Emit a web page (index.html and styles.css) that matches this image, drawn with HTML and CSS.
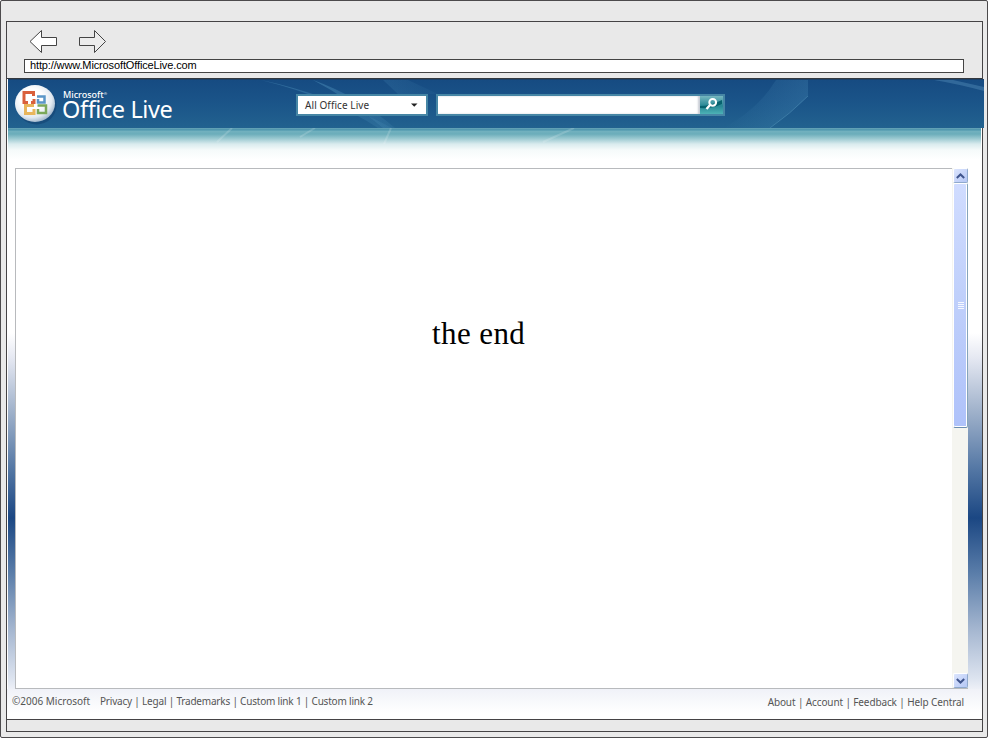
FILE: index.html
```html
<!DOCTYPE html>
<html lang="en">
<head>
<meta charset="utf-8">
<title>Microsoft Office Live</title>
<link rel="stylesheet" href="styles.css">
</head>
<body>
<div class="window">
  <div class="frame">
    <div class="toolbar">
      <div class="nav">
        <svg width="28" height="24" viewBox="0 0 28 24"><path d="M0 11.500 11.500.5V7.500H26.500V15.500H11.500V22.500Z" fill="#fff" stroke="#444"/></svg>
        <svg width="28" height="24" viewBox="0 0 28 24"><path d="M26.500 11.500 15.500.5V7.500H.5V15.500H15.500V22.500Z" fill="#ececec" stroke="#444"/></svg>
      </div>
      <div class="address"><span class="url">http://www.MicrosoftOfficeLive.com</span></div>
    </div>
    <header class="banner">
      <svg class="rays" width="976" height="48" viewBox="0 0 976 48">
        <defs>
          <linearGradient id="ray" x1="0" y1="0" x2="1" y2="0"><stop offset="0" stop-color="#5aa0c8" stop-opacity="0"/><stop offset="1" stop-color="#5aa0c8" stop-opacity=".22"/></linearGradient>
          <linearGradient id="fade" x1="0" y1="0" x2="1" y2="0"><stop offset="0" stop-color="#5aa0c8" stop-opacity=".4"/><stop offset="1" stop-color="#5aa0c8" stop-opacity=".12"/></linearGradient>
        </defs>
        <path d="M253 0Q320 14 384 48H370Q325 18 253 0Z" fill="url(#fade)"/>
        <path d="M305 0Q350 16 387 48H375Q340 18 305 0Z" fill="url(#fade)"/>
        <path d="M375 0 390 14H430L400 0Z" fill="url(#fade)" opacity=".4"/>
        <path d="M800 0V16Q782 34 762 48H715Q750 30 768 0Z" fill="url(#ray)"/>
        <path d="M800 16Q782 34 762 48" fill="none" stroke="#5d9dc0" opacity=".4"/>
        <path d="M926 0Q950 4 976 11V7L945 0Z" fill="#5b94bd" opacity=".4"/>
      </svg>
      <div class="brand">
        <svg class="orb" width="43" height="42" viewBox="0 0 43 42">
          <defs><radialGradient id="orb" cx=".42" cy=".38" r=".62"><stop offset=".45" stop-color="#fff"/><stop offset=".8" stop-color="#e3eaf1"/><stop offset="1" stop-color="#a9bdd0"/></radialGradient></defs>
          <ellipse cx="21.500" cy="20.500" rx="20" ry="19" fill="#123f70" opacity=".55"/>
          <ellipse cx="20" cy="18.500" rx="20" ry="18.500" fill="url(#orb)"/>
          <g fill="none" stroke-width="3">
            <path d="M18.500 11V7.500H9V17.500H13M16 17.500H19V14" stroke="#d9603c"/>
            <path d="M22 11.500H29.500V17.500H23V14" stroke="#5b96c8" stroke-width="2.500"/>
            <path d="M19 20.500H10.500V28.500H19V24" stroke="#e9b65c"/>
            <path d="M22.500 20.500H31V28H23V24" stroke="#7ba85a" stroke-width="2.500"/>
          </g>
        </svg>
        <div class="wordmark"><span class="ms">Microsoft<sup>®</sup></span><span class="ol">Office Live</span></div>
      </div>
      <div class="scope"><span>All Office Live</span><svg width="7" height="4" viewBox="0 0 7 4"><path d="M0 .5H6.500L3.250 3.700Z" fill="#222"/></svg></div>
      <div class="search">
        <div class="field"></div>
        <div class="go"><svg width="22" height="17" viewBox="0 0 22 17"><path d="M0 10Q10 10 22 4V8Q12 13 0 12Z" fill="#07626f"/><g fill="none" stroke="#fff"><circle cx="12.700" cy="6.300" r="3.400" stroke-width="2"/><path d="M10 9 6.500 13" stroke-width="2.400"/></g></svg></div>
      </div>
    </header>
    <div class="glow">
      <svg width="600" height="22" viewBox="0 0 600 22"><g fill="none" stroke="#fff" stroke-width="2" opacity=".16"><path d="M224 0 209 14M307 0 292 9M383 0 376 16M566 0 535 14"/></g></svg>
    </div>
    <main class="stage">
      <div class="edge"></div>
      <div class="page"><p>the end</p></div>
      <div class="scrollbar">
        <div class="button"><svg width="9" height="6" viewBox="0 0 9 6"><path d="M.8 5 4.500 1.500 8.200 5" fill="none" stroke="#40558d" stroke-width="2"/></svg></div>
        <div class="thumb"><i></i><i></i><i></i><i></i></div>
        <div class="track"></div>
        <div class="button"><svg width="9" height="6" viewBox="0 0 9 6"><path d="M.8 1 4.500 4.500 8.200 1" fill="none" stroke="#40558d" stroke-width="2"/></svg></div>
      </div>
      <div class="edge"></div>
    </main>
    <footer class="footer">
      <div class="links left"><span class="copy">©2006 Microsoft</span><span class="nav-links">Privacy | Legal | Trademarks | Custom link 1 | Custom link 2</span></div>
      <div class="links right">About | Account | Feedback | Help Central</div>
    </footer>
    <div class="status"></div>
  </div>
</div>
</body>
</html>
```
FILE: styles.css
```css
* { box-sizing: border-box; }

body { margin: 0; background: #fff; }

.window {
  width: 988px;
  height: 738px;
  padding: 20px 4px 5px 5px;
  border: 1px solid #4c4a4c;
  border-radius: 2px;
  background: #e9e9e9;
}

.frame {
  display: flex;
  flex-direction: column;
  width: 977px;
  height: 711px;
  border: 1px solid #454345;
  background: #fff;
}

.toolbar {
  height: 57px;
  flex: none;
  padding: 8px 18px 0 17px;
  border-bottom: 1px solid #34383e;
  background: #e9e9e9;
}

.nav { display: flex; gap: 21px; height: 29px; padding-left: 6px; }

.address {
  height: 14px;
  width: 940px;
  padding-left: 5px;
  border: 1px solid #444;
  background: #fff;
  font: 11px/11px "Liberation Sans", Arial, sans-serif;
  color: #000;
  white-space: nowrap;
}

.url { letter-spacing: -0.13px; }

.banner {
  position: relative;
  display: flex;
  flex: none;
  width: 976px;
  height: 49px;
  margin-left: 1px;
  border-top: 1px solid #1b4067;
  background: linear-gradient(#164b82, #1b5589 50%, #22628f);
}

.rays { position: absolute; top: 0; left: 0; }

.brand { position: relative; display: flex; width: 288px; padding: 5px 0 0 7px; }

.orb { flex: none; }

.wordmark {
  display: flex;
  flex-direction: column;
  padding: 5px 0 0 5px;
  color: #fff;
  font-family: "Noto Sans", "Open Sans", sans-serif;
  white-space: nowrap;
}

.ms { height: 10px; font-size: 9px; line-height: 10px; font-weight: 500; }
.ms sup { font-size: 4px; line-height: 0; vertical-align: 3px; }
.ol { font-size: 23.5px; line-height: 18px; letter-spacing: -0.4px; font-variant-ligatures: common-ligatures; margin-left: -1px; }

.scope {
  position: relative;
  display: flex;
  align-items: center;
  justify-content: space-between;
  width: 132px;
  height: 22px;
  margin-top: 14px;
  padding: 0 8px 0 7px;
  border: 2px solid #4686a5;
  background: #fff;
  color: #333;
  font: 10px/18px "Noto Sans", "Open Sans", sans-serif;
  letter-spacing: 0.08px;
}

.search {
  position: relative;
  display: flex;
  width: 289px;
  height: 22px;
  margin: 14px 0 0 8px;
  border: 2px solid #4686a5;
  background: #fff;
}

.field { width: 262px; box-shadow: inset -2px 0 2px #c9cdd5; }

.go {
  width: 23px;
  background: linear-gradient(#76b7c0, #278794 55%, #4db2b6);
}
.go svg { display: block; }

.glow {
  height: 40px;
  flex: none;
  width: 973px;
  margin-left: 1px;
  background: linear-gradient(#68a5b8 0, #4a94ab 2px, #72b1bf 3px, #6badba 6px, #a0ccd3 11px, #d9ebee 16px, #f5fafa 22px, #fff 32px);
}
.glow svg { display: block; }

.stage {
  display: grid;
  grid-template-columns: 7px 937px 16px 14px;
  height: 521px;
  flex: none;
  margin-left: 1px;
}

.edge {
  background: linear-gradient(#fff 165px, #e5e8f2 190px, #a4b5cd 240px, #5578a5 300px, #1b4783 350px, #5a7da9 405px, #a3b5cf 460px, #dce3ef 510px, #edf0f7);
}

.page {
  border: solid #b8babd;
  border-width: 1px 0 1px 1px;
  background: #fff;
  color: #000;
}

.page p {
  margin: 148px 0 0 416px;
  font: 31px/34px "Liberation Serif", "Times New Roman", serif;
  letter-spacing: 0.4px;
}

.scrollbar {
  display: flex;
  flex-direction: column;
  padding: 0 0 0 1px;
  border-bottom: 1px solid #b8babd;
  background: #f5f5f0;
}

.button {
  display: flex;
  align-items: center;
  justify-content: center;
  height: 15px;
  border: 1px solid #fff;
  border-right-color: #8fa9cc;
  border-bottom-color: #8fa9cc;
  border-radius: 2px;
  background: linear-gradient(135deg, #dce5fd, #b5c7f5);
}

.thumb {
  display: flex;
  flex-direction: column;
  align-items: center;
  justify-content: center;
  gap: 1px;
  height: 245px;
  border: 1px solid #fff;
  border-right-color: #85a4bb;
  border-bottom-color: #6b8db0;
  border-radius: 2px;
  background: linear-gradient(#d0dcff, #c0d0fb 45%, #afc2fa);
  box-shadow: inset -1px 0 #fff, inset 0 -1px #fff;
}

.thumb i { width: 6px; height: 1px; background: #f5f8ff; }

.track { flex: 1; }

.footer {
  display: flex;
  justify-content: space-between;
  height: 30px;
  flex: none;
  padding: 4px 18px 0 5px;
  background: linear-gradient(#f0f2f8, #fff 24px);
  color: #555;
  font: 10px/16px "Noto Sans", "Open Sans", sans-serif;
  white-space: nowrap;
}

.links { display: flex; }
.copy { width: 88px; }
.nav-links { letter-spacing: -0.2px; }
.right { padding-top: 1px; letter-spacing: -0.12px; }

.status { flex: 1; border-top: 1px solid #454345; background: #e9e9e9; }
```
